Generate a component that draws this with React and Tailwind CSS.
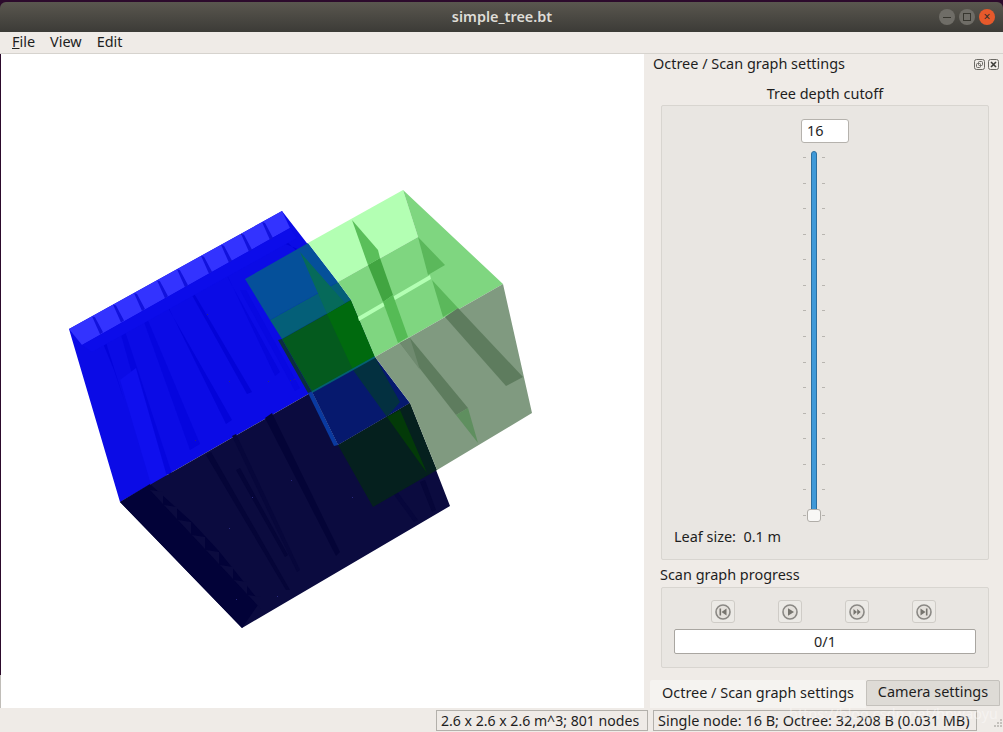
const uiFont = { fontFamily: "'Noto Sans', 'Open Sans', sans-serif" };

const ticks = Array.from({ length: 15 }, (_, i) => i);

// notches along the top edge of the blue cube
const notchX = [92, 113, 134, 157, 177, 201, 221, 241, 262];

const blueStreaks = [
  ["M92 317 L103 333 L124 400 L114 370 Z", "#0303dc"],
  ["M113 306 L122 322 L172 474 L160 474 Z", "#0505df"],
  ["M134 294 L144 311 L200 444 L190 450 Z", "#0505df"],
  ["M157 284 L163 299 L232 420 L226 424 Z", "#0303da"],
  ["M188 288 L192 290 L252 392 L247 394 Z", "#0303d8"],
  ["M120 380 L136 368 L168 480 L152 488 Z", "#0f0fee"],
  ["M221 262 L229 280 L280 372 L275 376 Z", "#0606de"],
  ["M262 234 L272 228 L330 282 L300 250 Z", "#0303d8"],
  ["M240 290 L246 290 L300 388 L295 391 Z", "#0808e2"],
];

const navyStreaks = [
  ["M206 455 L211 452 L290 590 L286 590 Z", "#050538"],
  ["M265 418 L272 413 L340 552 L336 556 Z", "#040437"],
  ["M232 436 L236 434 L300 570 L297 572 Z", "#07073b"],
  ["M236 470 L240 468 L288 555 L285 557 Z", "#050538"],
  ["M392 492 L396 490 L418 520 L414 522 Z", "#07073c"],
  ["M420 482 L425 480 L436 510 L432 512 Z", "#060639"],
];

// stepped teeth along the lower left edge of the navy face
const teeth = [0, 1, 2, 3, 4, 5, 6, 7];

const specks = [
  [229, 381], [207, 314], [241, 234], [290, 380], [268, 381], [294, 379],
  [195, 440], [291, 480], [252, 497], [229, 528], [352, 497], [236, 599], [277, 596],
];

function Cube() {
  return (
    <svg viewBox="1 54 643 654" className="block h-[654px] w-[643px]">
      <polygon points="69,329 282,211 351,300 375,357 312,392 120,502" fill="#0b0be6" />
      {blueStreaks.map(([d, c]) => (
        <path key={d} d={d} fill={c} />
      ))}
      <polygon points="69,329 282,211 290,228 82,345" fill="#3333ff" />
      <polygon points="82,345 290,228 297,238 92,352" fill="#0c0cea" />
      {notchX.map((x) => {
        const y = 329 - (x - 69) * 0.554;
        return <polygon key={x} points={`${x},${y} ${x + 3},${y + 1} ${x + 11},${y + 16} ${x + 8},${y + 18}`} fill="#1212dd" />;
      })}

      <polygon points="120,502 312,392 338,445 410,403 450,506 242,628" fill="#0b0b3f" />
      <polygon points="120,502 150,484 192,522 218,550 260,602 242,628" fill="#020238" />
      {teeth.map((i) => {
        const x = 150 + i * 14;
        const y = 490 + i * 15;
        return <polygon key={i} points={`${x},${y} ${x + 13},${y + 2} ${x + 13},${y + 14}`} fill="#0b0b3f" />;
      })}
      {navyStreaks.map(([d, c]) => (
        <path key={d} d={d} fill={c} />
      ))}

      {/* green box seen through the blue one */}
      <polygon points="245,279 308,243 338,282 270,320" fill="#05509a" />
      <polygon points="270,320 338,282 351,300 282,339" fill="#045f78" />
      <polygon points="278,340 282,339 312,392 308,393" fill="#0b2e3f" />
      <polygon points="282,339 351,300 375,357 312,392" fill="#045a1e" />
      <polygon points="300,252 345,303 327,314" fill="#066a5a" />
      <polygon points="327,314 351,300 375,357 353,370" fill="#006a0e" />
      <polygon points="312,392 375,357 410,403 338,445" fill="#06196e" />
      <polygon points="308,393 312,392 338,445 334,446" fill="#0a3aa0" />
      <polygon points="353,370 375,357 400,402 387,417" fill="#033040" />
      <polyline points="312,392 375,357" fill="none" stroke="#046070" strokeWidth="2" />
      <polygon points="338,445 410,403 437,470 373,507" fill="#05201e" />
      <polygon points="387,417 400,410 427,473" fill="#033a08" />

      {/* green box */}
      <polygon points="308,243 403,190 418,237 338,282" fill="#b3ffb3" />
      <polygon points="338,282 418,237 403,190 503,284 375,357 351,300" fill="#7fd680" />
      <polygon points="358,317 430,275 431,279 359,321" fill="#b3ffb3" />
      <polygon points="375,357 503,284 532,413 437,470 410,403" fill="#809a80" />
      <polygon points="352,220 378,250 380,258 368,265" fill="#5abf5a" />
      <polygon points="368,265 380,258 393,295 383,302" fill="#41a541" />
      <polygon points="383,302 393,295 408,337 398,343" fill="#55bb55" />
      <polygon points="418,237 445,265 428,275" fill="#5bb85b" />
      <polygon points="432,280 458,308 443,317" fill="#5bb85b" />
      <polygon points="445,317 458,308 523,377 506,386" fill="#5e7c5e" />
      <polygon points="400,343 410,338 468,408 456,415" fill="#5e7c5e" />
      <polygon points="400,343 410,338 420,370" fill="#6f8a6f" />
      <polygon points="456,415 468,408 478,443" fill="#5f8f5f" />

      {specks.map(([x, y]) => (
        <rect key={`${x}-${y}`} x={x} y={y} width="1" height="1" fill="#2a2a80" />
      ))}
    </svg>
  );
}

function TransportIcon({ kind }) {
  return (
    <svg viewBox="0 0 18 18" className="h-[18px] w-[18px]">
      <circle cx="9" cy="9" r="7" fill="#e4e1dc" stroke="#8a8884" strokeWidth="1.6" />
      {kind === "first" && <path d="M5.5 5.5h1.6v7H5.5zM12.5 5.5v7L7.5 9z" fill="#77756f" />}
      {kind === "play" && <path d="M7 5.2v7.6L13 9z" fill="#77756f" />}
      {kind === "next" && <path d="M5.5 6v6L9 9zM9.2 6v6l3.5-3z" fill="#77756f" />}
      {kind === "last" && <path d="M5.5 5.5v7l5-3.5zM10.9 5.5h1.6v7h-1.6z" fill="#77756f" />}
    </svg>
  );
}

function TransportButton({ kind }) {
  return (
    <button className="flex h-[23px] w-[24px] items-center justify-center rounded-[3px] border border-[#cfccc7] bg-[#eceae6]">
      <TransportIcon kind={kind} />
    </button>
  );
}

function WindowButton({ children, className }) {
  return (
    <div className={`flex h-[16px] w-[16px] items-center justify-center rounded-full text-[#2f2e2a] ${className}`}>
      {children}
    </div>
  );
}

function DepthSlider() {
  return (
    <div className="relative mt-[8px] ml-[141px] flex h-[371px] w-[22px] justify-between self-start">
      <div className="flex h-[365px] flex-col justify-between pt-[6px]">
        {ticks.map((t) => (
          <div key={t} className="h-px w-[3px] bg-[#b8b5b0]" />
        ))}
      </div>
      <div className="h-[364px] w-[6px] rounded-[3px] border border-[#2d6f9f] bg-[#3f99d8]" />
      <div className="flex h-[365px] flex-col justify-between pt-[6px]">
        {ticks.map((t) => (
          <div key={t} className="h-px w-[3px] bg-[#b8b5b0]" />
        ))}
      </div>
      <div className="absolute bottom-0 left-[4px] h-[13px] w-[14px] rounded-[3px] border border-[#b0ada8] bg-[#f8f7f5]" />
    </div>
  );
}

export default function App() {
  return (
    <div className="relative flex h-[732px] w-[1003px] flex-col overflow-hidden bg-[#2c0a2c] pt-[2px] text-[14.45px] text-[#1e1e1e]" style={uiFont}>
      {/* title bar */}
      <div className="relative flex h-[30px] shrink-0 items-center justify-center rounded-t-[6px] bg-gradient-to-b from-[#5a574f] to-[#3c3b37] pb-[1px] pl-[1px] font-semibold text-[#dfddd7]">
        simple_tree.bt
        <div className="absolute right-[8px] top-[7px] flex gap-[4px]">
          <WindowButton className="bg-[#6f6d67]">
            <div className="h-px w-[8px] bg-[#37362f]" />
          </WindowButton>
          <WindowButton className="bg-[#6f6d67]">
            <div className="h-[8px] w-[8px] border border-[#37362f]" />
          </WindowButton>
          <WindowButton className="bg-[#e6592b]">
            <span className="text-[12px] font-normal leading-none">×</span>
          </WindowButton>
        </div>
      </div>

      {/* menu */}
      <div className="flex h-[22px] shrink-0 items-center gap-[15px] border-b border-[#d6d3ce] bg-[#efebe7] pb-[2px] pl-[12px]">
        <span><span className="underline">F</span>ile</span>
        <span>View</span>
        <span>Edit</span>
      </div>

      {/* main */}
      <div className="flex h-[654px] shrink-0 bg-[#efebe7]">
        <div className="flex w-px shrink-0 flex-col">
          <div className="h-[621px] bg-[#2c0a2c]" />
          <div className="flex-1 bg-[#c0bdb8]" />
        </div>
        <div className="h-[654px] w-[643px] shrink-0 bg-white">
          <Cube />
        </div>

        <div className="flex min-w-0 flex-1 flex-col">
          <div className="flex h-[20px] items-center justify-between pl-[9px] pr-[4px]">
            <span>Octree / Scan graph settings</span>
            <div className="flex gap-[3px]">
              <svg viewBox="0 0 11 11" className="h-[11px] w-[11px]" fill="none" stroke="#6b6964">
                <rect x="0.5" y="0.5" width="10" height="10" rx="2" />
                <rect x="4.5" y="2.5" width="4" height="4" rx="1" />
                <rect x="2.5" y="4.5" width="4" height="4" rx="1" />
              </svg>
              <svg viewBox="0 0 11 11" className="h-[11px] w-[11px]" fill="none" stroke="#6b6964">
                <rect x="0.5" y="0.5" width="10" height="10" rx="2" />
                <path d="M3 3l5 5M8 3l-5 5" stroke="#3f3e3a" strokeWidth="1.6" />
              </svg>
            </div>
          </div>

          <div className="mt-[10px] pl-[17px] pr-[14px]">
            <div className="text-center leading-[20px]">Tree depth cutoff</div>
            <div className="mt-[1px] flex h-[455px] flex-col items-center rounded-[2px] border border-[#d8d5d0] bg-[#e9e6e2] pt-[13px]">
              <div className="flex h-[24px] w-[48px] items-center rounded-[3px] border border-[#b5b2ad] bg-white pl-[5px]">
                16
              </div>
              <DepthSlider />
              <div className="mt-[5px] w-full pl-[12px] leading-[20px]">Leaf size:&nbsp; 0.1 m</div>
            </div>

            <div className="-ml-px mt-[5px] h-[21px] leading-[20px]">Scan graph progress</div>
            <div className="mt-[1px] flex h-[81px] flex-col rounded-[2px] border border-[#d8d5d0] bg-[#e9e6e2] px-[12px] pt-[12px]">
              <div className="flex justify-between pl-[37px] pr-[40px]">
                <TransportButton kind="first" />
                <TransportButton kind="play" />
                <TransportButton kind="next" />
                <TransportButton kind="last" />
              </div>
              <div className="mt-[6px] flex h-[25px] items-center justify-center rounded-[2px] border border-[#a9a6a1] bg-white">
                0/1
              </div>
            </div>
          </div>

          <div className="mt-[12px] flex h-[28px] items-stretch pl-[6px]">
            <div className="flex w-[216px] items-center justify-center whitespace-nowrap rounded-t-[2px] bg-[#f5f3f0] pb-[2px]">
              Octree / Scan graph settings
            </div>
            <div className="mb-[2px] flex w-[134px] items-center justify-center whitespace-nowrap rounded-t-[2px] border border-[#c4c1bc] bg-[#dedbd6] pb-[2px]">
              Camera settings
            </div>
          </div>
        </div>
      </div>

      {/* status bar */}
      <div className="flex h-[24px] shrink-0 items-end gap-[5px] bg-[#efebe7] pb-px pl-[436px]">
        <div className="flex h-[21px] w-[212px] items-center whitespace-nowrap border border-[#b3b0ab] pl-[4px] text-[14.1px]">
          2.6 x 2.6 x 2.6 m^3; 801 nodes
        </div>
        <div className="flex h-[21px] w-[324px] items-center whitespace-nowrap border border-[#b3b0ab] pl-[4px]">
          Single node: 16 B; Octree: 32,208 B (0.031 MB)
        </div>
        <svg viewBox="0 0 12 12" className="mb-px ml-[9px] h-[12px] w-[12px]" fill="#c4c1bc">
          <rect x="9" y="1" width="2" height="2" />
          <rect x="6" y="4" width="2" height="2" />
          <rect x="9" y="4" width="2" height="2" />
          <rect x="3" y="7" width="2" height="2" />
          <rect x="6" y="7" width="2" height="2" />
          <rect x="9" y="7" width="2" height="2" />
        </svg>
      </div>

      {/* watermark on the screenshot */}
      <div className="absolute left-[789px] top-[703px] text-white/40">https://blog.csdn.net/hnwaoyu</div>
    </div>
  );
}
